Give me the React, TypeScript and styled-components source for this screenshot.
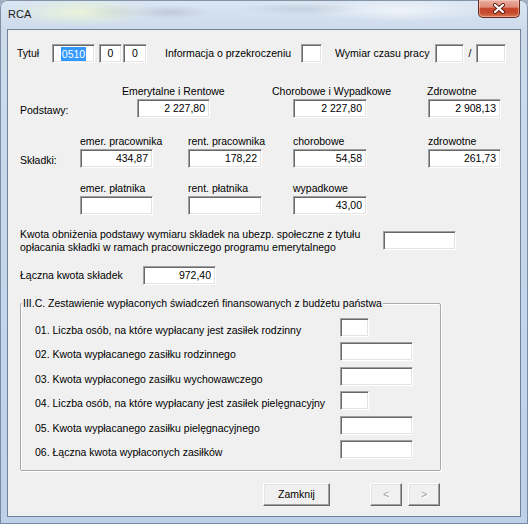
import React from "react";
import styled, { createGlobalStyle } from "styled-components";

const Global = createGlobalStyle`
  html, body { margin: 0; padding: 0; background: #9fb0c4; }
  body { font-family: "Liberation Sans", Arial, sans-serif; font-size: 10.5px; color: #000; }
  * { box-sizing: border-box; }
`;

const Window = styled.div`
  width: 528px;
  height: 524px;
  display: flex;
  flex-direction: column;
  padding: 0 7px 7px 7px;
  border-radius: 7px 7px 0 0;
  overflow: hidden;
  box-shadow: inset 0 0 0 1px rgba(60, 80, 110, 0.55);
  background:
    radial-gradient(ellipse 70px 14px at 80px 12px, rgba(236, 246, 214, 0.9), transparent),
    radial-gradient(ellipse 40px 7px at 110px 12px, rgba(150, 160, 172, 0.35), transparent),
    radial-gradient(ellipse 40px 7px at 170px 12px, rgba(150, 160, 172, 0.35), transparent),
    radial-gradient(ellipse 60px 6px at 300px 9px, rgba(160, 170, 182, 0.3), transparent),
    radial-gradient(ellipse 90px 12px at 400px 10px, rgba(245, 248, 252, 0.8), transparent),
    linear-gradient(180deg, #dbe6f2 0px, #cddbec 28px, #c3d5ea 60%, #bcd0e8 100%);
`;

const TitleBar = styled.div`
  height: 29px;
  flex: none;
  display: flex;
  align-items: flex-start;
  justify-content: space-between;
`;

const Title = styled.div`
  padding: 8px 0 0 1px;
  font-size: 11px;
  line-height: 13px;
  color: #1a1a1a;
`;

const CloseButton = styled.div`
  width: 42px;
  height: 18px;
  margin-right: 1px;
  display: flex;
  align-items: center;
  justify-content: center;
  border: 1px solid #6a2a20;
  border-top: none;
  border-radius: 0 0 5px 5px;
  background: linear-gradient(180deg, #eab0a2 0%, #dc8a76 42%, #c8462c 50%, #c44a2e 75%, #d9784f 100%);
  box-shadow: inset 0 0 0 1px rgba(255, 220, 210, 0.45);
`;

const Panel = styled.div`
  flex: 1;
  background: #f0f0f0;
  border: 1px solid #70829a;
  padding-top: 14px;
  display: flex;
  flex-direction: column;
`;

const TopRow = styled.div`
  display: flex;
  align-items: center;
  height: 19px;
  padding-left: 9px;
`;

const Text = styled.span<{ $w?: number; $ml?: number; $align?: string }>`
  flex: none;
  width: ${(p) => (p.$w ? `${p.$w}px` : "auto")};
  margin-left: ${(p) => p.$ml ?? 0}px;
  text-align: ${(p) => p.$align ?? "left"};
  line-height: 13px;
  white-space: nowrap;
`;

const Edit = styled.div<{ $w: number; $align?: string; $ml?: number; $mt?: number }>`
  flex: none;
  width: ${(p) => p.$w}px;
  height: 19px;
  margin-left: ${(p) => p.$ml ?? 0}px;
  margin-top: ${(p) => p.$mt ?? 0}px;
  background: #fff;
  border: 1px solid;
  border-color: #a0a0a0 #ffffff #ffffff #a0a0a0;
  box-shadow: inset 1px 1px 0 #696969, inset -1px -1px 0 #e3e3e3;
  line-height: 17px;
  text-align: ${(p) => p.$align ?? "right"};
  padding: ${(p) => (p.$align === "center" ? "0" : "0 4px 0 3px")};
  white-space: nowrap;
  overflow: hidden;
`;

const Selected = styled.span`
  display: inline-block;
  background: #3399ff;
  color: #fff;
  line-height: 14px;
  padding: 0 1px;
  vertical-align: middle;
`;

const FieldRow = styled.div<{ $mt: number }>`
  display: grid;
  grid-template-columns: 60px 108px 105px 135px 73px;
  align-items: start;
  margin: ${(p) => p.$mt}px 0 0 12px;
`;

const RowLabel = styled.div`
  grid-column: 1;
  padding-top: 16px;
  line-height: 19px;
  white-space: nowrap;
`;

const Field = styled.div<{ $col: string; $pl?: number }>`
  grid-column: ${(p) => p.$col};
  display: flex;
  flex-direction: column;
  align-items: flex-start;
  padding-left: ${(p) => p.$pl ?? 0}px;
`;

const FieldLabel = styled.div<{ $ml?: number }>`
  height: 13px;
  line-height: 13px;
  margin: 0 0 1px ${(p) => p.$ml ?? 0}px;
  white-space: nowrap;
`;

const KwotaRow = styled.div`
  display: flex;
  align-items: flex-start;
  margin: 13px 0 0 12px;
`;

const MultiLine = styled.div`
  width: 363px;
  line-height: 13px;
  white-space: nowrap;
`;

const InlineRow = styled.div<{ $mt: number }>`
  display: flex;
  align-items: center;
  margin: ${(p) => p.$mt}px 0 0 12px;
`;

const Group = styled.fieldset`
  width: 421px;
  margin: 11px 0 0 12px;
  padding: 8px 0 11px 0;
  min-width: 0;
  border: 1px solid #a9a9a9;
  border-radius: 2px;
  box-shadow: inset 1px 1px 0 #fff, 1px 1px 0 #fff;
`;

const GroupLegend = styled.legend`
  margin-left: 1px;
  padding: 0 1px;
  line-height: 14px;
  background: #f0f0f0;
  white-space: nowrap;
`;

const ListGrid = styled.div`
  display: grid;
  grid-template-columns: 305px auto;
  row-gap: 5.4px;
  align-items: start;
  padding-left: 14px;
`;

const ListLabel = styled.div`
  margin-top: 6px;
  line-height: 13px;
  white-space: nowrap;
`;

const ButtonRow = styled.div`
  display: flex;
  margin-top: 12px;
  padding-left: 255px;
`;

const NavGroup = styled.div`
  display: flex;
  gap: 6px;
  margin-left: 40px;
`;

const Button = styled.button<{ $w: number }>`
  width: ${(p) => p.$w}px;
  height: 23px;
  padding: 0;
  font-family: "Liberation Sans", Arial, sans-serif;
  font-size: 10.5px;
  color: #000;
  background: #f0f0f0;
  border: 1px solid;
  border-color: #ffffff #696969 #696969 #ffffff;
  border-radius: 0;
  box-shadow: inset -1px -1px 0 #a0a0a0, inset 1px 1px 0 #e3e3e3;
  &:disabled {
    color: #a0a0a0;
    text-shadow: 1px 1px 0 #fff;
  }
`;

const CloseGlyph = () => (
  <svg width="14" height="11" viewBox="0 0 14 11">
    <path d="M3 2 L11 9 M11 2 L3 9" stroke="#5a1d12" strokeWidth="4" strokeLinecap="round" />
    <path d="M3 2 L11 9 M11 2 L3 9" stroke="#ffffff" strokeWidth="2.2" strokeLinecap="round" />
  </svg>
);

const items: { label: string; w: number }[] = [
  { label: "01. Liczba osób, na które wypłacany jest zasiłek rodzinny", w: 29 },
  { label: "02. Kwota wypłacanego zasiłku rodzinnego", w: 73 },
  { label: "03. Kwota wypłaconego zasiłku wychowawczego", w: 73 },
  { label: "04. Liczba osób, na które wypłacany jest zasiłek pielęgnacyjny", w: 29 },
  { label: "05. Kwota wypłacanego zasiłku pielęgnacyjnego", w: 73 },
  { label: "06. Łączna kwota wypłaconych zasiłków", w: 73 },
];

export default function App() {
  return (
    <>
      <Global />
      <Window>
        <TitleBar>
          <Title>RCA</Title>
          <CloseButton>
            <CloseGlyph />
          </CloseButton>
        </TitleBar>
        <Panel>
          <TopRow>
            <Text $w={35}>Tytuł</Text>
            <Edit $w={43} $align="center">
              <Selected>0510</Selected>
            </Edit>
            <Edit $w={23} $align="center" $ml={4}>0</Edit>
            <Edit $w={24} $align="center" $ml={1}>0</Edit>
            <Text $ml={18} $w={136}>Informacja o przekroczeniu</Text>
            <Edit $w={21} />
            <Text $ml={13} $w={100}>Wymiar czasu pracy</Text>
            <Edit $w={29} />
            <Text $w={12} $align="center">/</Text>
            <Edit $w={30} />
          </TopRow>

          <FieldRow $mt={22}>
            <RowLabel>Podstawy:</RowLabel>
            <Field $col="2 / span 2" $pl={57}>
              <FieldLabel $ml={-15}>Emerytalne i Rentowe</FieldLabel>
              <Edit $w={73}>2 227,80</Edit>
            </Field>
            <Field $col="4">
              <FieldLabel $ml={-21}>Chorobowe i Wypadkowe</FieldLabel>
              <Edit $w={74}>2 227,80</Edit>
            </Field>
            <Field $col="5">
              <FieldLabel $ml={-1}>Zdrowotne</FieldLabel>
              <Edit $w={73}>2 908,13</Edit>
            </Field>
          </FieldRow>

          <FieldRow $mt={15}>
            <RowLabel>Składki:</RowLabel>
            <Field $col="2">
              <FieldLabel>emer. pracownika</FieldLabel>
              <Edit $w={73}>434,87</Edit>
            </Field>
            <Field $col="3">
              <FieldLabel>rent. pracownika</FieldLabel>
              <Edit $w={74}>178,22</Edit>
            </Field>
            <Field $col="4">
              <FieldLabel>chorobowe</FieldLabel>
              <Edit $w={74}>54,58</Edit>
            </Field>
            <Field $col="5">
              <FieldLabel>zdrowotne</FieldLabel>
              <Edit $w={73}>261,73</Edit>
            </Field>
          </FieldRow>

          <FieldRow $mt={12}>
            <Field $col="2">
              <FieldLabel>emer. płatnika</FieldLabel>
              <Edit $w={73} />
            </Field>
            <Field $col="3">
              <FieldLabel>rent. płatnika</FieldLabel>
              <Edit $w={74} />
            </Field>
            <Field $col="4">
              <FieldLabel>wypadkowe</FieldLabel>
              <Edit $w={74}>43,00</Edit>
            </Field>
          </FieldRow>

          <KwotaRow>
            <MultiLine>
              Kwota obniżenia podstawy wymiaru składek na ubezp. społeczne z tytułu
              <br />
              opłacania składki w ramach pracowniczego programu emerytalnego
            </MultiLine>
            <Edit $w={73} $mt={3} />
          </KwotaRow>

          <InlineRow $mt={12}>
            <Text $w={123}>Łączna kwota składek</Text>
            <Edit $w={73}>972,40</Edit>
          </InlineRow>

          <Group>
            <GroupLegend>III.C. Zestawienie wypłaconych świadczeń finansowanych z budżetu państwa</GroupLegend>
            <ListGrid>
              {items.map((it) => (
                <React.Fragment key={it.label}>
                  <ListLabel>{it.label}</ListLabel>
                  <Edit $w={it.w} />
                </React.Fragment>
              ))}
            </ListGrid>
          </Group>

          <ButtonRow>
            <Button $w={67}>Zamknij</Button>
            <NavGroup>
              <Button $w={32} disabled>&lt;</Button>
              <Button $w={32} disabled>&gt;</Button>
            </NavGroup>
          </ButtonRow>
        </Panel>
      </Window>
    </>
  );
}
